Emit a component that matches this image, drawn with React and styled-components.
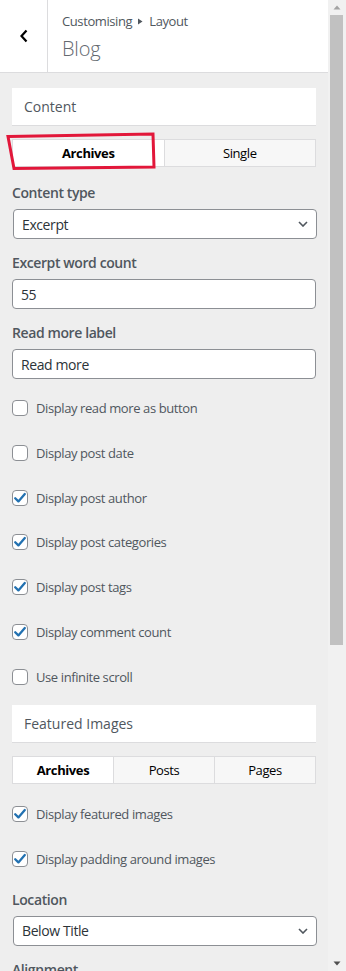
import React from "react";
import styled, { createGlobalStyle } from "styled-components";

const Global = createGlobalStyle`
  html, body { margin: 0; padding: 0; }
  body {
    background: #eeeeee;
    font-family: "Open Sans", "Noto Sans", sans-serif;
    letter-spacing: -0.025em;
  }
  * { box-sizing: border-box; }
`;

const Frame = styled.div`
  display: flex;
  width: 346px;
  height: 971px;
  overflow: hidden;
  background: #eeeeee;
`;

const Main = styled.div`
  width: 328px;
  flex: none;
  display: flex;
  flex-direction: column;
`;

const Header = styled.header`
  height: 73px;
  flex: none;
  display: flex;
  background: #fff;
  border-bottom: 1px solid #dcdcde;
`;

const BackButton = styled.button`
  width: 48px;
  flex: none;
  border: 0;
  border-right: 1px solid #dcdcde;
  background: #fff;
  display: flex;
  align-items: center;
  justify-content: center;
  padding: 0;
`;

const Titles = styled.div`
  padding: 11px 0 0 14px;
  display: flex;
  flex-direction: column;
`;

const Crumbs = styled.div`
  font-size: 13px;
  line-height: 20px;
  color: #50575e;
  display: flex;
  align-items: center;
  gap: 6px;
`;

const PageTitle = styled.h1`
  margin: 4px 0 0;
  font-size: 20px;
  line-height: 28px;
  font-weight: 300;
  letter-spacing: -0.01em;
  color: #646970;
`;

const Body = styled.div`
  padding: 15px 12px 0 12px;
  display: flex;
  flex-direction: column;
`;

const SectionTitle = styled.h3`
  margin: ${(p) => p.$mt || 0}px 0 13px;
  height: 38px;
  flex: none;
  background: #fff;
  border-bottom: 1px solid #dcdcde;
  padding: 0 12px;
  display: flex;
  align-items: center;
  font-size: 14px;
  font-weight: 500;
  letter-spacing: 0;
  color: #50575e;
`;

const Tabs = styled.div`
  position: relative;
  display: flex;
  height: 28px;
  flex: none;
  margin-bottom: ${(p) => p.$mb}px;
`;

const Tab = styled.button`
  flex: 1;
  margin: 0;
  padding: 0;
  border: 1px solid #dcdcde;
  & + & { border-left: 0; }
  background: ${(p) => (p.$active ? "#fff" : "#f7f7f7")};
  font-family: inherit;
  letter-spacing: inherit;
  font-size: 13px;
  font-weight: ${(p) => (p.$active ? 700 : 400)};
  color: #000;
`;

const Annotation = styled.svg`
  position: absolute;
  left: -8px;
  top: -9px;
  pointer-events: none;
`;

const Group = styled.div`
  display: flex;
  flex-direction: column;
  margin: ${(p) => p.$mt || 0}px 0 14px;
`;

const Label = styled.div`
  font-size: 14px;
  line-height: 20px;
  font-weight: 600;
  color: #50575e;
  margin-bottom: 6px;
`;

const Field = styled.div`
  height: 30px;
  border: 1px solid #8c8f94;
  border-radius: 4px;
  background: #fff;
  padding: 0 8px;
  display: flex;
  align-items: center;
  justify-content: space-between;
  font-size: 14px;
  color: #2c3338;
  margin-right: ${(p) => (p.$select ? -1 : 0)}px;
  margin-left: ${(p) => (p.$select ? 1 : 0)}px;
`;

const CheckRow = styled.label`
  height: 30px;
  flex: none;
  display: flex;
  align-items: center;
  gap: 8px;
  margin: ${(p) => p.$mt || 0}px 0 14.75px;
  font-size: 13px;
  color: #50575e;
`;

const Box = styled.span`
  width: 16px;
  height: 16px;
  flex: none;
  border: 1px solid #8c8f94;
  border-radius: 4px;
  background: #fff;
  display: flex;
  align-items: center;
  justify-content: center;
`;

const Scrollbar = styled.div`
  width: 18px;
  flex: none;
  background: #f1f1f1;
  display: flex;
  flex-direction: column;
`;

const ScrollArrow = styled.div`
  height: 15px;
  flex: none;
  display: flex;
  align-items: center;
  justify-content: center;
  padding-right: 1px;
`;

const Thumb = styled.div`
  width: 13px;
  height: 630px;
  flex: none;
  margin-left: 2px;
  background: #c1c1c1;
`;

const Spacer = styled.div`
  flex: 1;
`;

const Chevron = () => (
  <svg width="10" height="6" viewBox="0 0 10 6">
    <path d="M1 1 L5 5 L9 1" fill="none" stroke="#50575e" strokeWidth="1.6" />
  </svg>
);

const Select = ({ value }) => (
  <Field $select>
    <span>{value}</span>
    <Chevron />
  </Field>
);

const Checkbox = ({ checked, children, mt }) => (
  <CheckRow $mt={mt}>
    <Box>
      {checked && (
        <svg width="14" height="14" viewBox="0 0 14 14">
          <path
            d="M2.2 7.2 L5.4 10.4 L11.8 3"
            fill="none"
            stroke="#2271b1"
            strokeWidth="2.3"
            strokeLinecap="round"
            strokeLinejoin="round"
          />
        </svg>
      )}
    </Box>
    {children}
  </CheckRow>
);

export default function App() {
  return (
    <>
      <Global />
      <Frame>
        <Main>
          <Header>
            <BackButton aria-label="Back">
              <svg width="10" height="14" viewBox="0 0 10 14">
                <path
                  d="M7.5 1.5 L2.5 7 L7.5 12.5"
                  fill="none"
                  stroke="#000"
                  strokeWidth="2.2"
                />
              </svg>
            </BackButton>
            <Titles>
              <Crumbs>
                <span>Customising</span>
                <svg width="5" height="7" viewBox="0 0 5 7">
                  <path d="M0 0.5 L4.5 3.5 L0 6.5 Z" fill="#50575e" />
                </svg>
                <span>Layout</span>
              </Crumbs>
              <PageTitle>Blog</PageTitle>
            </Titles>
          </Header>

          <Body>
            <SectionTitle>Content</SectionTitle>
            <Tabs $mb={16}>
              <Tab $active>Archives</Tab>
              <Tab>Single</Tab>
              <Annotation width="160" height="46" viewBox="0 0 160 46">
                <path
                  d="M4 6.5 L149 4 L150 37 L10 38.5 Z"
                  fill="none"
                  stroke="#e2173a"
                  strokeWidth="3"
                  strokeLinejoin="miter"
                />
              </Annotation>
            </Tabs>

            <Group>
              <Label>Content type</Label>
              <Select value="Excerpt" />
            </Group>
            <Group>
              <Label>Excerpt word count</Label>
              <Field>55</Field>
            </Group>
            <Group>
              <Label>Read more label</Label>
              <Field>Read more</Field>
            </Group>

            <Checkbox>Display read more as button</Checkbox>
            <Checkbox>Display post date</Checkbox>
            <Checkbox checked>Display post author</Checkbox>
            <Checkbox checked>Display post categories</Checkbox>
            <Checkbox checked>Display post tags</Checkbox>
            <Checkbox checked>Display comment count</Checkbox>
            <Checkbox>Use infinite scroll</Checkbox>

            <SectionTitle $mt={-1}>Featured Images</SectionTitle>
            <Tabs $mb={15}>
              <Tab $active>Archives</Tab>
              <Tab>Posts</Tab>
              <Tab>Pages</Tab>
            </Tabs>
            <Checkbox checked>Display featured images</Checkbox>
            <Checkbox checked>Display padding around images</Checkbox>

            <Group $mt={1}>
              <Label>Location</Label>
              <Select value="Below Title" />
            </Group>
            <Group>
              <Label>Alignment</Label>
            </Group>
          </Body>
        </Main>
        <Scrollbar>
          <ScrollArrow>
            <svg width="8" height="5" viewBox="0 0 8 5">
              <path d="M0.5 4.5 L4 0.5 L7.5 4.5 Z" fill="#a3a3a3" />
            </svg>
          </ScrollArrow>
          <Thumb />
          <Spacer />
          <ScrollArrow>
            <svg width="8" height="5" viewBox="0 0 8 5">
              <path d="M0.5 0.5 L7.5 0.5 L4 4.5 Z" fill="#505050" />
            </svg>
          </ScrollArrow>
        </Scrollbar>
      </Frame>
    </>
  );
}
